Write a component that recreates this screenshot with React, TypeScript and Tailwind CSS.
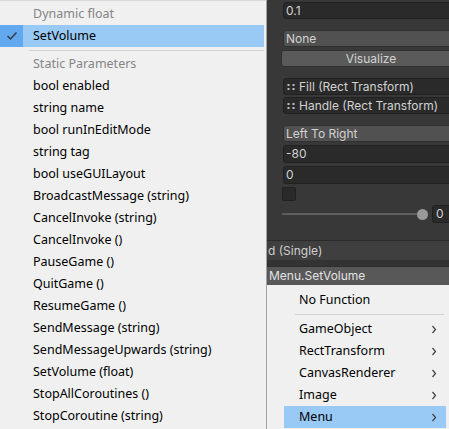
import React from "react";

const staticItems = [
  "bool enabled",
  "string name",
  "bool runInEditMode",
  "string tag",
  "bool useGUILayout",
  "BroadcastMessage (string)",
  "CancelInvoke (string)",
  "CancelInvoke ()",
  "PauseGame ()",
  "QuitGame ()",
  "ResumeGame ()",
  "SendMessage (string)",
  "SendMessageUpwards (string)",
  "SetVolume (float)",
  "StopAllCoroutines ()",
  "StopCoroutine (string)",
];

const subMenus = ["GameObject", "RectTransform", "CanvasRenderer", "Image", "Menu"];

function Dots() {
  return (
    <svg width="9" height="8" viewBox="0 0 9 8" className="shrink-0">
      <rect x="0.5" y="1" width="2" height="2" fill="#bdbdbd" />
      <rect x="5.5" y="1" width="2" height="2" fill="#bdbdbd" />
      <rect x="0.5" y="5" width="2" height="2" fill="#bdbdbd" />
      <rect x="5.5" y="5" width="2" height="2" fill="#bdbdbd" />
    </svg>
  );
}

function Chevron() {
  return (
    <svg width="6" height="9" viewBox="0 0 6 9" className="shrink-0">
      <path d="M1.5 1 L4.5 4.5 L1.5 8" fill="none" stroke="#404040" strokeWidth="1.2" />
    </svg>
  );
}

export default function App() {
  return (
    <div className="w-[449px] h-[429px] overflow-hidden bg-[#383838] flex">
      {/* Left popup menu */}
      <div className="w-[267px] shrink-0 h-full bg-[#f0f0f0] border-t border-t-[#d8d8d8] border-r border-r-[#a3a3a3] pt-[2px] font-['Noto_Sans',sans-serif] text-[12.5px] text-black">
        <div className="h-[22px] flex items-center pl-[33px] text-[#858585]">Dynamic float</div>
        <div className="h-[22px] mr-[2px] flex items-center bg-[#99c9f5]">
          <div className="w-[23px] h-full bg-[#62a8ee] flex items-center justify-center">
            <svg width="12" height="10" viewBox="0 0 12 10">
              <path d="M1.5 5 L4.5 8 L10.5 1.5" fill="none" stroke="#2e3b48" strokeWidth="1.5" />
            </svg>
          </div>
          <span className="pl-[10px]">SetVolume</span>
        </div>
        <div className="h-[6px] flex items-center pl-[29px] pr-[2px]">
          <div className="h-px w-full bg-[#d4d4d4]" />
        </div>
        <div className="h-[22px] flex items-center pl-[33px] text-[#858585]">Static Parameters</div>
        {staticItems.map((t) => (
          <div key={t} className="h-[22px] flex items-center pl-[33px] whitespace-nowrap">
            {t}
          </div>
        ))}
      </div>

      {/* Inspector panel */}
      <div className="flex-1 relative font-['Inter',sans-serif] text-[12px] text-[#d2d2d2] overflow-hidden">
        <div className="flex flex-col items-start pl-[16px] pt-[2px]">
          <div className="h-[17px] w-[180px] shrink-0 rounded-[3px] bg-[#2a2a2a] border border-[#212121] flex items-center pl-[2px]">0.1</div>
          <div className="mt-[11px] h-[17px] w-[180px] shrink-0 rounded-[3px] bg-[#515151] border border-[#303030] flex items-center pl-[2px]">None</div>
          <div className="mt-[3px] -ml-[2px] h-[17px] w-[180px] shrink-0 rounded-[3px] bg-[#5a5a5a] border border-[#303030] flex items-center justify-center">Visualize</div>
          <div className="mt-[11px] h-[17px] w-[180px] shrink-0 rounded-[3px] bg-[#2a2a2a] border border-[#212121] flex items-center pl-[3px] gap-[3px]">
            <Dots />
            <span className="whitespace-nowrap">Fill (Rect Transform)</span>
          </div>
          <div className="mt-[2px] h-[17px] w-[180px] shrink-0 rounded-[3px] bg-[#2a2a2a] border border-[#212121] flex items-center pl-[3px] gap-[3px]">
            <Dots />
            <span className="whitespace-nowrap">Handle (Rect Transform)</span>
          </div>
          <div className="mt-[11px] h-[17px] w-[180px] shrink-0 rounded-[3px] bg-[#515151] border border-[#303030] flex items-center pl-[2px]">Left To Right</div>
          <div className="mt-[3px] h-[18px] w-[180px] shrink-0 rounded-[3px] bg-[#2a2a2a] border border-[#212121] flex items-center pl-[2px]">-80</div>
          <div className="mt-[3px] h-[18px] w-[180px] shrink-0 rounded-[3px] bg-[#2a2a2a] border border-[#212121] flex items-center pl-[2px]">0</div>
          <div className="mt-[3px] -ml-[1px] h-[14px] w-[14px] shrink-0 rounded-[2px] bg-[#2a2a2a] border border-[#212121]" />
          <div className="mt-[4px] -ml-[1px] h-[18px] flex items-center shrink-0">
            <div className="w-[135px] h-[2px] shrink-0 bg-[#5e5e5e]" />
            <div className="w-[11px] h-[11px] shrink-0 rounded-full bg-[#999999]" />
            <div className="ml-[4px] h-[18px] w-[30px] shrink-0 rounded-[3px] bg-[#2a2a2a] border border-[#212121] flex items-center pl-[3px]">0</div>
          </div>
        </div>
        <div className="mt-[17px] h-px bg-[#2a2a2a]" />
        <div className="h-[19px] bg-[#3f3f3f] flex items-center pl-[1px] text-[#cfcfcf] whitespace-nowrap">d (Single)</div>
        <div className="h-[6px] bg-[#333333]" />
        <div className="h-[19px] bg-[#585858] border-t border-t-[#2f2f2f] flex items-center pl-[2px] text-[#e2e2e2] whitespace-nowrap">Menu.SetVolume</div>

        {/* Right popup menu */}
        <div className="absolute left-0 right-0 top-[285px] bottom-0 bg-[#f0f0f0] pt-[4px] font-['Noto_Sans',sans-serif] text-[12.5px] text-black">
          <div className="h-[22px] flex items-center pl-[32px]">No Function</div>
          <div className="h-[7px] flex items-center pl-[28px] pr-[5px]">
            <div className="h-px w-full bg-[#d4d4d4]" />
          </div>
          {subMenus.map((t) => (
            <div
              key={t}
              className={
                t === "Menu"
                  ? "h-[22px] ml-[17px] mr-[3px] flex items-center justify-between pl-[15px] pr-[9px] bg-[#99c9f5]"
                  : "h-[22px] ml-[17px] mr-[3px] flex items-center justify-between pl-[15px] pr-[9px]"
              }
            >
              <span>{t}</span>
              <Chevron />
            </div>
          ))}
        </div>
      </div>
    </div>
  );
}
